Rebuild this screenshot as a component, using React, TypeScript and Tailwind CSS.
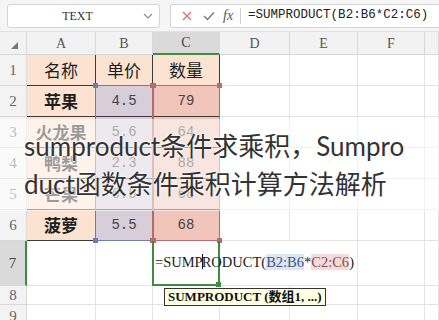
import React from "react";

const serif = "[font-family:'Liberation_Serif','Noto_Sans_CJK_SC',serif]";
const mono = "[font-family:'Liberation_Mono',monospace]";
const cjk = "[font-family:'Noto_Sans_CJK_SC',sans-serif]";
const caption = "[font-family:Lato,'Noto_Sans_CJK_SC',sans-serif]";

const data = [
  ["名称", "单价", "数量"],
  ["苹果", "4.5", "79"],
  ["火龙果", "5.6", "64"],
  ["鸭梨", "2.3", "88"],
  ["芒果", "6.5", "68"],
  ["菠萝", "5.5", "68"],
];

const grid = "border-r border-b border-[#e3e3e3]";
const rowHead = `flex items-center justify-center border-r border-b border-[#d8d8d8] bg-[#f3f3f3] text-[15px] text-[#666] ${serif}`;

function Corner({ className }: { className: string }) {
  return <span className={`absolute h-[5px] w-[5px] ${className}`} />;
}

export default function App() {
  return (
    <div className="relative h-[320px] w-[439px] overflow-hidden bg-white">
      {/* Formula bar */}
      <div className="flex h-[32px] items-center border-b border-[#e0e0e0] bg-[#f5f5f5] pl-[7px]">
        <div className="flex h-[24px] w-[153px] items-center rounded-[3px] border border-[#d4d4d4] bg-white">
          <span className={`flex-1 pl-[4px] text-center text-[12px] text-[#333] ${serif}`}>TEXT</span>
          <svg width="10" height="6" viewBox="0 0 10 6" className="mr-[6px]">
            <path d="M1 1 L5 5 L9 1" fill="none" stroke="#8a8a8a" strokeWidth="1.2" />
          </svg>
        </div>
        <div className="ml-[10px] flex h-[24px] flex-1 items-center rounded-l-[3px] border border-r-0 border-[#d4d4d4] bg-white">
          <svg width="10" height="10" viewBox="0 0 10 10" className="ml-[11px]">
            <path d="M1 1 L9 9 M9 1 L1 9" stroke="#e06c6c" strokeWidth="1.3" />
          </svg>
          <svg width="12" height="10" viewBox="0 0 12 10" className="ml-[11px]">
            <path d="M1 5 L4.5 8.5 L11 1.5" fill="none" stroke="#777" strokeWidth="1.3" />
          </svg>
          <span className={`ml-[8px] text-[14px] italic text-[#555] ${serif}`}>fx</span>
          <span className="ml-[7px] h-[16px] w-px bg-[#d0d0d0]" />
          <span className={`ml-[7px] whitespace-nowrap text-[12.5px] text-[#222] ${mono}`}>
            =SUMPRODUCT(B2:B6*C2:C6)
          </span>
        </div>
      </div>

      {/* Sheet */}
      <div className="relative grid grid-cols-[27px_69px_57px_67px_70px_68px_67px_1fr] grid-rows-[23px_31px_31px_31px_31px_31px_31px_45px_19px_1fr]">
        {/* Column headers */}
        <div className="flex items-end justify-start border-r border-b border-[#d8d8d8] bg-[#f2f2f2] pb-[5px] pl-[11px]">
          <svg width="7" height="7" viewBox="0 0 7 7">
            <path d="M7 0 L7 7 L0 7 Z" fill="#777" />
          </svg>
        </div>
        {["A", "B", "C", "D", "E", "F", ""].map((c) => (
          <div
            key={c}
            className={
              c === "C"
                ? `flex items-center justify-center border-r border-b-2 border-r-[#d8d8d8] border-b-[#3c8d40] bg-[#dadada] text-[14px] text-[#444] ${serif}`
                : `flex items-center justify-center border-r border-b border-[#d8d8d8] bg-[#f2f2f2] text-[14px] text-[#555] ${serif}`
            }
          >
            {c}
          </div>
        ))}

        {/* Table rows 1-6 */}
        {data.map((r, i) => (
          <React.Fragment key={i}>
            <div className={rowHead}>{i + 1}</div>
            <div
              className={`flex items-center justify-center border-r border-b border-[#3a3a3a] bg-[#fce3d1] text-[17px] text-[#1e1e1e] ${cjk} ${i > 0 ? "font-bold" : ""}`}
            >
              {r[0]}
            </div>
            {i === 0 ? (
              <>
                <div className={`flex items-center justify-center border-r border-b border-[#3a3a3a] bg-[#fce3d1] text-[17px] text-[#1e1e1e] ${cjk}`}>
                  {r[1]}
                </div>
                <div className={`flex items-center justify-center border-r border-b border-[#3a3a3a] bg-[#fce3d1] text-[17px] text-[#1e1e1e] ${cjk}`}>
                  {r[2]}
                </div>
              </>
            ) : (
              <>
                <div className={`flex items-center justify-center border-r border-b border-[#3a3a3a] bg-[#d8ceda] text-[14px] text-[#444] ${mono}`}>
                  {r[1]}
                </div>
                <div className={`flex items-center justify-center border-r border-b border-[#3a3a3a] bg-[#f1c5b9] text-[14px] text-[#444] ${mono}`}>
                  {r[2]}
                </div>
              </>
            )}
            <div className={grid} />
            <div className={grid} />
            <div className={grid} />
            <div className={grid} />
          </React.Fragment>
        ))}

        {/* Row 7 */}
        <div className={`flex items-center justify-center border-r-2 border-b border-r-[#3c8d40] border-b-[#d8d8d8] bg-[#dadada] text-[15px] text-[#444] ${serif}`}>
          7
        </div>
        <div className={grid} />
        <div className={grid} />
        <div className="relative z-10 flex items-center border-r-2 border-b-2 border-l-2 border-[#3c8d40] -ml-px pl-px">
          <span className={`whitespace-nowrap text-[14.5px] text-[#222] ${serif}`}>
            =SUMP<span className="mx-[-1px] inline-block h-[15px] w-px translate-y-[2px] bg-[#111]" />RODUCT(
            <span className="bg-[#dde5f1] text-[#3a5589]">B2:B6</span>*
            <span className="bg-[#f4dcdc] text-[#8a4a4a]">C2:C6</span>)
          </span>
          <span className="absolute -bottom-[3px] -right-[3px] h-[5px] w-[5px] bg-[#3c8d40]" />
        </div>
        <div className="border-b border-[#e3e3e3]" />
        <div className={grid} />
        <div className={grid} />
        <div className={grid} />

        {/* Rows 8-9 */}
        {[8, 9].map((n) => (
          <React.Fragment key={n}>
            <div className={rowHead}>{n}</div>
            <div className={grid} />
            <div className={grid} />
            <div className={grid} />
            <div className={grid} />
            <div className={grid} />
            <div className={grid} />
            <div className={grid} />
          </React.Fragment>
        ))}

        {/* Reference ranges */}
        <div className="pointer-events-none absolute left-[95px] top-[53px] h-[156px] w-[59px] border border-[#6f7bb5]">
          <Corner className="-left-[3px] -top-[3px] bg-[#6f7bb5]" />
          <Corner className="-right-[3px] -top-[3px] bg-[#6f7bb5]" />
          <Corner className="-bottom-[3px] -left-[3px] bg-[#6f7bb5]" />
          <Corner className="-bottom-[3px] -right-[3px] bg-[#6f7bb5]" />
        </div>
        <div className="pointer-events-none absolute left-[152px] top-[53px] h-[156px] w-[68px] border border-[#b36d74]">
          <Corner className="-left-[3px] -top-[3px] bg-[#b36d74]" />
          <Corner className="-right-[3px] -top-[3px] bg-[#b36d74]" />
          <Corner className="-bottom-[3px] -left-[3px] bg-[#b36d74]" />
          <Corner className="-bottom-[3px] -right-[3px] bg-[#b36d74]" />
        </div>
      </div>

      {/* Function tooltip */}
      <div className={`absolute left-[164px] top-[288px] flex h-[18px] items-center border border-[#333] bg-[#ffffe4] px-[3px] text-[13px] font-bold text-[#111] whitespace-nowrap ${serif}`}>
        SUMPRODUCT (数组1, ...)
      </div>

      {/* Caption overlay */}
      <div className="absolute left-0 top-[119px] h-[92px] w-full bg-white/55">
        <div
          className={`pl-[24px] pt-[8px] text-[26px] leading-[38px] text-[#333] [text-shadow:0_0_3px_#fff,0_0_2px_#fff] ${caption}`}
        >
          <div className="whitespace-nowrap">sumproduct条件求乘积，Sumpro</div>
          <div className="whitespace-nowrap">duct函数条件乘积计算方法解析</div>
        </div>
      </div>
    </div>
  );
}
